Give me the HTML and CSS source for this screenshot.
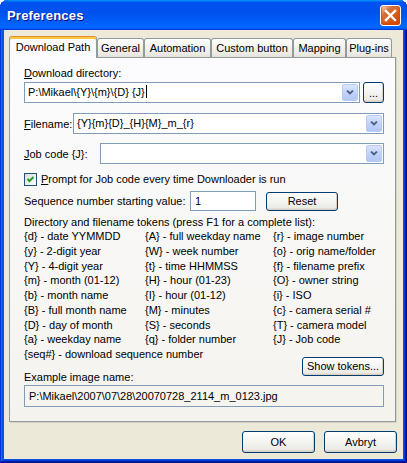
FILE: index.html
```html
<!DOCTYPE html>
<html lang="en">
<head>
    <meta charset="UTF-8">
    <title>Preferences</title>
    <link rel="stylesheet" href="styles.css">
</head>
<body>
    <div class="window">
        <div class="titlebar">
            <span class="title">Preferences</span>
            <button class="close-btn" aria-label="Close">
                <svg width="21" height="21" viewBox="0 0 21 21"><path d="M6 6 L15 15 M15 6 L6 15" stroke="#fff" stroke-width="2.4" stroke-linecap="square"/></svg>
            </button>
        </div>

        <div class="client">
            <div class="tabs">
                <div class="tab active tab-download">Download Path</div>
                <div class="tab tab-general">General</div>
                <div class="tab tab-auto">Automation</div>
                <div class="tab tab-custom">Custom button</div>
                <div class="tab tab-mapping">Mapping</div>
                <div class="tab tab-plugins">Plug-ins</div>
            </div>

            <div class="panel">
                <div class="field-label"><u>D</u>ownload directory:</div>
                <div class="dir-row">
                    <div class="combo">
                        <span class="combo-text">P:\Mikael\{Y}\{m}\{D} {J}<span class="caret"></span></span>
                        <span class="drop"><svg width="8" height="5" viewBox="0 0 8 5"><path d="M1 0.5 L4 3.5 L7 0.5" stroke="#4d6185" stroke-width="1.8" fill="none"/></svg></span>
                    </div>
                    <button class="btn browse-btn">...</button>
                </div>

                <div class="inline-row filename-row">
                    <span class="inline-label label-filename"><u>F</u>ilename:</span>
                    <div class="combo">
                        <span class="combo-text">{Y}{m}{D}_{H}{M}_m_{r}</span>
                        <span class="drop"><svg width="8" height="5" viewBox="0 0 8 5"><path d="M1 0.5 L4 3.5 L7 0.5" stroke="#4d6185" stroke-width="1.8" fill="none"/></svg></span>
                    </div>
                </div>

                <div class="inline-row jobcode-row">
                    <span class="inline-label label-job"><u>J</u>ob code {J}:</span>
                    <div class="combo">
                        <span class="combo-text"></span>
                        <span class="drop"><svg width="8" height="5" viewBox="0 0 8 5"><path d="M1 0.5 L4 3.5 L7 0.5" stroke="#4d6185" stroke-width="1.8" fill="none"/></svg></span>
                    </div>
                </div>

                <div class="check-row">
                    <span class="checkbox"><svg width="11" height="11" viewBox="0 0 11 11"><path d="M2.5 5 L4.5 7 L8.5 3" stroke="#21a121" stroke-width="2" fill="none"/></svg></span>
                    <span><u>P</u>rompt for Job code every time Downloader is run</span>
                </div>

                <div class="seq-row">
                    <span class="seq-label">Sequence number starting value:</span>
                    <div class="textbox seq-input">1</div>
                    <button class="btn reset-btn">Reset</button>
                </div>

                <div class="tokens-title">Directory and filename tokens (press F1 for a complete list):</div>
                <div class="tokens">
                    <span>{d} - date YYMMDD</span>
                    <span>{A} - full weekday name</span>
                    <span>{r} - image number</span>
                    <span>{y} - 2-digit year</span>
                    <span>{W} - week number</span>
                    <span>{o} - orig name/folder</span>
                    <span>{Y} - 4-digit year</span>
                    <span>{t} - time HHMMSS</span>
                    <span>{f} - filename prefix</span>
                    <span>{m} - month (01-12)</span>
                    <span>{H} - hour (01-23)</span>
                    <span>{O} - owner string</span>
                    <span>{b} - month name</span>
                    <span>{I} - hour (01-12)</span>
                    <span>{i} - ISO</span>
                    <span>{B} - full month name</span>
                    <span>{M} - minutes</span>
                    <span>{c} - camera serial #</span>
                    <span>{D} - day of month</span>
                    <span>{S} - seconds</span>
                    <span>{T} - camera model</span>
                    <span>{a} - weekday name</span>
                    <span>{q} - folder number</span>
                    <span>{J} - Job code</span>
                    <span class="token-wide">{seq#} - download sequence number</span>
                </div>

                <div class="example-row">
                    <span class="example-label">Example image name:</span>
                    <button class="btn tokens-btn">Show tokens...</button>
                </div>
                <div class="textbox readonly">P:\Mikael\2007\07\28\20070728_2114_m_0123.jpg</div>
            </div>

            <div class="footer">
                <button class="btn dialog-btn">OK</button>
                <button class="btn dialog-btn">Avbryt</button>
            </div>
        </div>
    </div>
</body>
</html>
```

FILE: styles.css
```css
* {
    box-sizing: border-box;
    margin: 0;
    padding: 0;
}

body {
    margin: 0;
    font-family: "Liberation Sans", Arial, sans-serif;
    font-size: 11px;
    color: #000;
    background: #fff;
}

u {
    text-decoration: underline;
    text-underline-offset: 1px;
}

.window {
    width: 407px;
    height: 463px;
    display: flex;
    flex-direction: column;
    background: #0855dd;
    border-radius: 8px 8px 0 0;
    box-shadow: inset -1px -1px #00138c, inset 1px 1px #0831d9, inset -2px -2px #001ea0, inset 2px 2px #166aee, inset -3px -3px #003bda, inset 3px 3px #0855dd;
}

/* title bar */
.titlebar {
    height: 30px;
    flex: none;
    display: flex;
    align-items: center;
    justify-content: space-between;
    padding: 0 6px 0 7px;
    border-radius: 8px 8px 0 0;
    background: linear-gradient(180deg, #0997ff, #0053ee 8%, #0050ee 40%, #06f 88%, #06f 93%, #005bff 95%, #003dd7 96%, #003dd7);
}

.title {
    color: #fff;
    font-weight: bold;
    font-size: 13px;
    letter-spacing: 0.2px;
    text-shadow: 1px 1px #0f1089;
}

.close-btn {
    width: 21px;
    height: 21px;
    margin-top: 1px;
    border: 1px solid #fff;
    border-radius: 3px;
    display: flex;
    background: radial-gradient(circle at 90% 90%, #cc4600 0%, #dc6527 55%, #cd7546 70%, #ffccb2 90%, #fff 100%);
    box-shadow: inset 0 -1px 2px 1px #da4600;
}

.close-btn svg {
    margin: -1px;
}

/* client area */
.client {
    flex: 1;
    margin: 0 4px 4px;
    padding: 6px 7px 0 5px;
    background: #ece9d8;
}

.tabs {
    display: flex;
    align-items: flex-end;
    height: 21px;
}

.tab {
    height: 19px;
    line-height: 18px;
    text-align: center;
    border: 1px solid #919b9c;
    border-bottom: none;
    border-radius: 3px 3px 0 0;
    background: linear-gradient(180deg, #fff, #f3f3ef 40%, #ecebe6 80%, #e3e1d8);
}

.tab.active {
    position: relative;
    z-index: 1;
    height: 22px;
    margin-bottom: -1px;
    line-height: 19px;
    border-top: 1px solid #e68b2c;
    background: #fcfcfe;
    box-shadow: inset 0 2px #ffc83c;
    padding-top: 1px;
}

.tab-download { width: 88px; }
.tab-general { width: 47px; }
.tab-auto { width: 67px; }
.tab-custom { width: 82px; }
.tab-mapping { width: 53px; }
.tab-plugins { width: 46px; }

.panel {
    height: 365px;
    padding: 8px 11px 0 14px;
    border: 1px solid #919b9c;
    background: linear-gradient(180deg, #fcfcfe, #f4f3ee);
    box-shadow: 1px 1px #d6d3c2;
    display: flex;
    flex-direction: column;
}

.field-label {
    line-height: 14px;
}

/* combo boxes */
.dir-row {
    display: flex;
    gap: 3px;
    margin-top: 2px;
}

.combo {
    flex: 1;
    height: 21px;
    display: flex;
    border: 1px solid #7f9db9;
    background: #fff;
}

.combo-text {
    flex: 1;
    padding-left: 3px;
    line-height: 19px;
    white-space: nowrap;
}

.caret {
    display: inline-block;
    width: 1px;
    height: 13px;
    margin-left: 1px;
    vertical-align: -2px;
    background: #000;
}

.drop {
    width: 16px;
    margin: 1px;
    display: flex;
    align-items: center;
    justify-content: center;
    border: 1px solid #bacbf5;
    border-radius: 2px;
    background: linear-gradient(180deg, #dbe6fd, #c1d3fb 50%, #b2c7f5);
}

.inline-row {
    display: flex;
    align-items: center;
}

.filename-row {
    margin-top: 10px;
}

.jobcode-row {
    margin-top: 9px;
}

.label-filename { width: 49px; }
.label-job { width: 76px; }

/* buttons */
.btn {
    font-family: inherit;
    font-size: 11px;
    color: #000;
    border: 1px solid #003c74;
    border-radius: 3px;
    background: linear-gradient(180deg, #fff, #f6f6f3 40%, #ecebe6 85%, #d6d0c5);
    box-shadow: inset -1px -1px #d6d0c5;
    cursor: default;
}

.browse-btn {
    width: 21px;
    height: 21px;
    line-height: 16px;
}

/* checkbox */
.check-row {
    display: flex;
    align-items: center;
    gap: 4px;
    margin-top: 8px;
    line-height: 14px;
}

.checkbox {
    width: 13px;
    height: 13px;
    display: flex;
    align-items: center;
    justify-content: center;
    border: 1px solid #1c5180;
    background: linear-gradient(135deg, #dcdcd7, #fff);
}

.seq-row {
    display: flex;
    align-items: center;
    margin-top: 5px;
}

.seq-label {
    width: 166px;
}

.textbox {
    height: 20px;
    line-height: 18px;
    padding-left: 4px;
    border: 1px solid #7f9db9;
    background: #fff;
}

.seq-input {
    width: 66px;
}

.reset-btn {
    width: 72px;
    height: 19px;
    margin-left: 10px;
}

.tokens-title {
    margin-top: 4px;
    line-height: 14px;
}

.tokens {
    display: grid;
    grid-template-columns: 121px 128px auto;
    line-height: 14.75px;
    white-space: nowrap;
}

.token-wide {
    grid-column: 1 / -1;
}

.example-row {
    display: flex;
    justify-content: space-between;
    align-items: flex-start;
    margin-top: -5px;
}

.example-label {
    margin-top: 13px;
    line-height: 14px;
}

.tokens-btn {
    width: 82px;
    height: 19px;
}

.textbox.readonly {
    height: 22px;
    line-height: 20px;
    margin-top: 1px;
    padding-left: 4px;
    background: #f5f4ef;
}

.footer {
    display: flex;
    justify-content: flex-end;
    gap: 9px;
    padding-top: 9px;
    margin-right: -1px;
}

.dialog-btn {
    width: 73px;
    height: 22px;
}
```
